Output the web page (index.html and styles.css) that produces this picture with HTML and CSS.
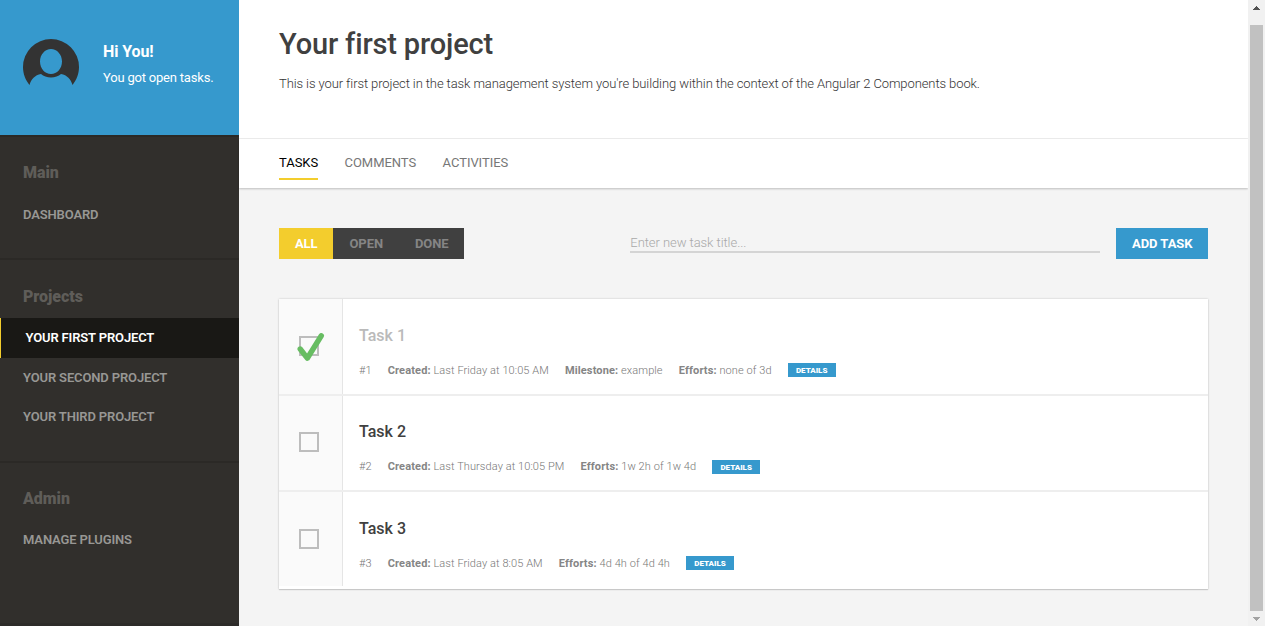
FILE: index.html
```html
<!DOCTYPE html>
<html lang="en">
<head>
<meta charset="utf-8">
<title>Your first project</title>
<link rel="stylesheet" href="styles.css">
</head>
<body>
<div class="app">
  <aside class="sidebar">
    <div class="user">
      <svg class="avatar" viewBox="0 0 56 48" width="56" height="48">
        <path fill="#333" fill-rule="evenodd" d="M28 0A28 28 0 0 0 0 28C0 35 2.500 41 6.500 46C8 40.500 12 36 18 35C20.500 37.300 24 38.500 28 38.500S35.500 37.300 38 35C44 36 48 40.500 49.500 46C53.500 41 56 35 56 28A28 28 0 0 0 28 0ZM28 10C34 10 39 15.500 39 22.500S34 35 28 35S17 29.500 17 22.500S22 10 28 10Z"/>
      </svg>
      <div class="greeting">
        <div class="hello">Hi You!</div>
        <div class="status">You got open tasks.</div>
      </div>
    </div>
    <nav class="section section-main">
      <h2>Main</h2>
      <a class="nav-item"><span>DASHBOARD</span></a>
    </nav>
    <nav class="section section-projects">
      <h2>Projects</h2>
      <a class="nav-item active"><span>YOUR FIRST PROJECT</span></a>
      <a class="nav-item"><span>YOUR SECOND PROJECT</span></a>
      <a class="nav-item"><span>YOUR THIRD PROJECT</span></a>
    </nav>
    <nav class="section section-admin">
      <h2>Admin</h2>
      <a class="nav-item"><span>MANAGE PLUGINS</span></a>
    </nav>
  </aside>
  <main class="content">
    <header class="project">
      <h1>Your first project</h1>
      <p>This is your first project in the task management system you're building within the context of the Angular 2 Components book.</p>
    </header>
    <div class="tabs">
      <a class="tab current">TASKS</a>
      <a class="tab">COMMENTS</a>
      <a class="tab">ACTIVITIES</a>
    </div>
    <div class="body">
      <div class="tools">
        <div class="toggle">
          <span class="option all">ALL</span><span class="option open">OPEN</span><span class="option done">DONE</span>
        </div>
        <div class="entry">Enter new task title...</div>
        <div class="add">ADD TASK</div>
      </div>
      <div class="tasks">
        <div class="task">
          <div class="check"><div class="box"><svg class="tick" viewBox="0 0 30 30" width="30" height="30"><path d="M4.200 16L11.300 25.200L25.300 2.800" fill="none" stroke="#67bd62" stroke-width="5.400" stroke-linecap="round" stroke-linejoin="round"/></svg></div></div>
          <div class="info">
            <div class="title finished">Task 1</div>
            <div class="meta"><span>#1</span><span><b>Created:</b> Last Friday at 10:05 AM</span><span><b>Milestone:</b> example</span><span><b>Efforts:</b> none of 3d</span><span class="details">DETAILS</span></div>
          </div>
        </div>
        <div class="task second">
          <div class="check"><div class="box"></div></div>
          <div class="info">
            <div class="title">Task 2</div>
            <div class="meta"><span>#2</span><span><b>Created:</b> Last Thursday at 10:05 PM</span><span><b>Efforts:</b> 1w 2h of 1w 4d</span><span class="details">DETAILS</span></div>
          </div>
        </div>
        <div class="task last">
          <div class="check"><div class="box"></div></div>
          <div class="info">
            <div class="title">Task 3</div>
            <div class="meta"><span>#3</span><span><b>Created:</b> Last Friday at 8:05 AM</span><span><b>Efforts:</b> 4d 4h of 4d 4h</span><span class="details">DETAILS</span></div>
          </div>
        </div>
      </div>
    </div>
  </main>
  <div class="scrollbar">
    <svg width="17" height="25" viewBox="0 0 17 25" shape-rendering="crispEdges"><path fill="#505050" d="M8 6h1v1h1v1h1v1h1v1H5V9h1V8h1V7h1z"/></svg>
    <div class="thumb"></div>
    <svg width="17" height="15" viewBox="0 0 17 15" shape-rendering="crispEdges"><path fill="#a3a3a3" d="M5 6h7v1h-1v1h-1v1H9v1H8V9H7V8H6V7H5z"/></svg>
  </div>
</div>
</body>
</html>
```
FILE: styles.css
```css
* { box-sizing: border-box; }
body { margin: 0; font-family: Roboto, "Liberation Sans", sans-serif; font-size: 13px; overflow: hidden; }
h1, h2, p { margin: 0; }
.app { display: flex; width: 1265px; height: 626px; white-space: nowrap; }

.sidebar { width: 239px; background: #312f2c; display: flex; flex-direction: column; }
.user { height: 135px; background: #3699cd; display: flex; align-items: flex-start; padding: 39px 0 0 23px; gap: 24px; }
.greeting { color: #fff; padding-top: 3px; }
.hello { font-size: 16px; font-weight: 700; line-height: 20px; letter-spacing: -0.1px; }
.status { font-size: 13px; line-height: 16px; margin-top: 8px; letter-spacing: -0.2px; }
.section { border-bottom: 2px solid #2b2926; }
.section h2 { font-size: 16px; font-weight: 900; line-height: 20px; letter-spacing: -0.05px; color: #5f5d59; padding-left: 23px; }
.section-main { height: 125px; padding-top: 28px; border-top: 2px solid #2a2926; }
.section-main h2 { margin-top: -2px; }
.section-main .nav-item { margin-top: 12px; }
.section-projects { height: 203px; padding-top: 27px; }
.section-projects h2 { margin-bottom: 11px; }
.section-admin { height: 163px; padding-top: 26px; border-bottom: 3px solid #2d2b29; }
.section-admin h2 { margin-bottom: 11px; }
.nav-item { display: flex; align-items: center; height: 39px; padding-left: 23px; font-weight: 600; letter-spacing: -0.14px; color: #989794; }
.nav-item.active { height: 40px; background: #191815; border-left: 1px solid #f3cd2d; padding: 0 0 1px 24.5px; color: #fff; }

.content { width: 1009px; background: #f4f4f4; }
.project { height: 139px; background: #fff; border-bottom: 1px solid #eee; padding: 24px 0 0 40px; }
.project h1 { font-size: 29px; font-weight: 500; line-height: 40px; letter-spacing: -0.15px; color: #404040; }
.project p { font-size: 13px; font-weight: 300; line-height: 20px; margin-top: 10px; letter-spacing: -0.095px; color: #333; }
.tabs { height: 49px; display: flex; gap: 26.4px; padding: 13px 0 0 40px; background: #fff; box-shadow: 0 1px 2px rgba(0,0,0,.22); }
.tab { height: 28px; line-height: 21px; letter-spacing: -0.04px; color: #777; }
.tab.current { color: #000; border-bottom: 2px solid #f3cd2d; }

.body { padding: 40px 40px 0; }
.tools { display: flex; height: 31px; }
.toggle { display: flex; width: 185px; background: #404040; color: #858585; font-weight: 700; line-height: 31px; }
.option { text-align: center; letter-spacing: -0.05px; padding-left: 0.5px; }
.all { width: 54px; background: #f3cd2d; color: #fff; }
.open { width: 66px; }
.done { width: 65px; }
.entry { width: 470px; height: 25px; margin-left: 166px; padding-left: 0.3px; line-height: 29px; font-weight: 300; letter-spacing: -0.06px; color: #a9a9a9; border-bottom: 2px solid #d4d4d4; }
.add { width: 92px; margin-left: 16px; padding-left: 0.5px; background: #3699cd; color: #fff; font-weight: 700; text-align: center; letter-spacing: -0.05px; line-height: 31px; }

.tasks { margin-top: 40px; height: 290px; background: #fff; box-shadow: 0 0 2px rgba(0,0,0,.2), 0 1px 1px rgba(0,0,0,.12); }
.task { display: flex; height: 97px; border-bottom: 2px solid #eee; }
.task.second { height: 96px; }
.task.last { height: 94px; border-bottom: 0; }
.check { width: 64px; background: #fafafa; border-right: 1px solid #e5e5e5; padding: 37px 0 0 20px; }
.box { position: relative; width: 20px; height: 20px; border: 2px solid #bdbdbd; }
.tick { position: absolute; left: -5px; top: -5px; }
.info { padding: 27px 0 0 16px; }
.second .check { padding-top: 36px; }
.second .info { padding-top: 26px; }
.title { font-size: 16px; font-weight: 500; line-height: 20px; color: #404040; }
.title.finished { color: #bababa; }
.meta { display: flex; gap: 16px; margin-top: 17px; font-size: 11px; font-weight: 300; line-height: 15px; letter-spacing: 0.085px; color: #777; }
.meta b { font-weight: 700; letter-spacing: 0.14px; color: #858585; }
.meta .details { width: 48px; height: 14px; background: #3699cd; color: #fff; font-size: 8px; font-weight: 900; line-height: 15px; letter-spacing: 0; text-align: center; }
.second .details { margin-top: 1px; }

.scrollbar { width: 17px; background: #f1f1f1; display: flex; flex-direction: column; align-items: center; }
.scrollbar svg { display: block; }
.thumb { width: 13px; height: 586px; background: #c1c1c1; }
```
